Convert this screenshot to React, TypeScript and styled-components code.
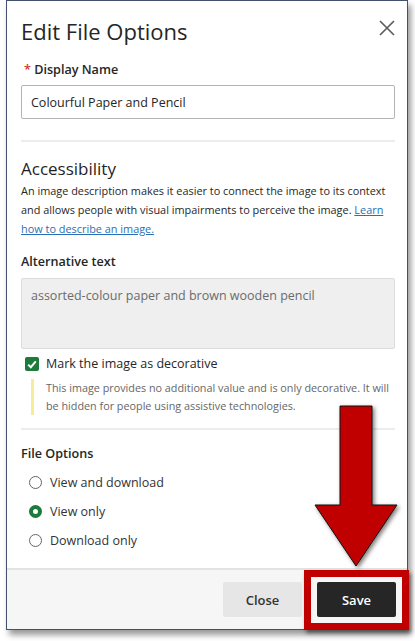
import { createGlobalStyle, styled } from 'styled-components';

const GlobalStyle = createGlobalStyle`
  html, body {
    margin: 0;
    padding: 0;
    background: #ffffff;
  }
  body {
    font-family: 'Open Sans', 'Liberation Sans', sans-serif;
    color: #262626;
  }
  * {
    box-sizing: border-box;
  }
`;

const FILE_OPTIONS = [
  { id: 'both', label: 'View and download', checked: false },
  { id: 'view', label: 'View only', checked: true },
  { id: 'download', label: 'Download only', checked: false },
];

const App = () => {
  return (
    <Page>
      <GlobalStyle />
      <Dialog>
        <Body>
          <Header>
            <Title>Edit File Options</Title>
            <CloseIcon aria-label='Close'>
              <svg width='16' height='16' viewBox='0 0 16 16'>
                <path d='M1 1 L15 15 M15 1 L1 15' stroke='#5a5a5a' strokeWidth='1.6' />
              </svg>
            </CloseIcon>
          </Header>

          <Label $indent>
            <Required>*</Required> Display Name
          </Label>
          <TextInput>Colourful Paper and Pencil</TextInput>

          <Divider />

          <SectionTitle>Accessibility</SectionTitle>
          <Paragraph>
            An image description makes it easier to connect the image to its context
            and allows people with visual impairments to perceive the image.{' '}
            <LinkText>Learn how to describe an image.</LinkText>
          </Paragraph>

          <Label $top={15}>Alternative text</Label>
          <TextArea>assorted-colour paper and brown wooden pencil</TextArea>

          <CheckRow>
            <CheckBox>
              <svg width='10' height='9' viewBox='0 0 10 9'>
                <path d='M1.2 4.6 L3.8 7.2 L8.8 1.4' fill='none' stroke='#fff' strokeWidth='2' />
              </svg>
            </CheckBox>
            <CheckLabel>Mark the image as decorative</CheckLabel>
          </CheckRow>
          <HelpNote>
            This image provides no additional value and is only decorative. It will
            be hidden for people using assistive technologies.
          </HelpNote>

          <Divider $top={13} />

          <Label $top={15}>File Options</Label>
          <RadioList>
            {FILE_OPTIONS.map((opt) => (
              <RadioRow key={opt.id}>
                <Radio $checked={opt.checked} />
                <RadioLabel>{opt.label}</RadioLabel>
              </RadioRow>
            ))}
          </RadioList>
        </Body>

        <Footer>
          <Button>Close</Button>
          <Button $primary>Save</Button>
        </Footer>
      </Dialog>

      <Highlight />
      <Arrow width='90' height='170' viewBox='0 0 90 170'>
        <polygon
          points='27,3 59,3 59,102 84,102 43,163 2,102 27,102'
          fill='#c00000'
          stroke='#111'
          strokeWidth='1'
        />
      </Arrow>
    </Page>
  );
};

const Page = styled.div`
  position: relative;
  width: 415px;
  height: 641px;
  overflow: hidden;
`;

const Dialog = styled.div`
  margin-left: 6px;
  width: 402px;
  height: 630px;
  border: 1px solid #44516d;
  background: #fff;
  box-shadow: 3px 5px 6px rgba(0, 0, 0, 0.4);
  display: flex;
  flex-direction: column;
`;

const Body = styled.div`
  flex: 1;
  padding: 15px 12px 0 14px;
`;

const Header = styled.div`
  display: flex;
  justify-content: space-between;
  align-items: flex-start;
  height: 30px;
`;

const Title = styled.h1`
  margin: 0;
  font-size: 22px;
  font-weight: 400;
  line-height: 30px;
  color: #262626;
`;

const CloseIcon = styled.div`
  margin-top: 4px;
  width: 16px;
  height: 16px;
  display: flex;
`;

const Label = styled.div<{ $top?: number; $indent?: boolean }>`
  margin-top: ${(p) => p.$top ?? 15}px;
  padding-left: ${(p) => (p.$indent ? 3 : 0)}px;
  font-size: 12.6px;
  font-weight: 600;
  line-height: 18px;
  color: #262626;
`;

const Required = styled.span`
  color: #d0352b;
  font-weight: 600;
`;

const TextInput = styled.div`
  margin-top: 6px;
  height: 34px;
  border: 1px solid #b3b3b3;
  border-radius: 2px;
  padding: 0 9px;
  display: flex;
  align-items: center;
  font-size: 12.5px;
  color: #262626;
`;

const Divider = styled.div<{ $top?: number }>`
  margin-top: ${(p) => p.$top ?? 21}px;
  height: 2px;
  background: #ececec;
`;

const SectionTitle = styled.h2`
  margin: 16px 0 0;
  font-size: 17px;
  font-weight: 500;
  line-height: 22px;
  color: #1f1f1f;
`;

const Paragraph = styled.p`
  margin: 2px 0 0;
  font-size: 10.9px;
  line-height: 18.8px;
  color: #262626;
`;

const LinkText = styled.span`
  color: #2a6fb4;
  text-decoration: underline;
`;

const TextArea = styled.div`
  margin-top: 7px;
  height: 71px;
  border: 1px solid #dcdcdc;
  border-radius: 2px;
  background: #efefef;
  padding: 8px 9px;
  font-size: 12.5px;
  line-height: 18px;
  color: #6b6b6b;
`;

const CheckRow = styled.div`
  margin-top: 6px;
  display: flex;
  align-items: center;
  gap: 7px;
  padding-left: 4px;
  height: 18px;
`;

const CheckBox = styled.span`
  width: 14px;
  height: 14px;
  border-radius: 2px;
  background: #1c7a3a;
  display: flex;
  align-items: center;
  justify-content: center;
`;

const CheckLabel = styled.span`
  font-size: 12.5px;
  line-height: 18px;
  color: #262626;
`;

const HelpNote = styled.div`
  margin: 6px 0 0 10px;
  border-left: 3px solid #f7ec98;
  padding: 0 0 0 12px;
  font-size: 10.8px;
  line-height: 18px;
  color: #666;
`;

const RadioList = styled.div`
  margin-top: 9px;
  display: flex;
  flex-direction: column;
  gap: 9px;
  padding-left: 8px;
`;

const RadioRow = styled.div`
  display: flex;
  align-items: center;
  gap: 8px;
  height: 20px;
`;

const Radio = styled.span<{ $checked?: boolean }>`
  width: 13px;
  height: 13px;
  border-radius: 50%;
  border: ${(p) => (p.$checked ? '4px solid #1c7a3a' : '1.3px solid #666')};
  background: #fff;
`;

const RadioLabel = styled.span`
  font-size: 12.5px;
  color: #333;
`;

const Footer = styled.div`
  height: 61px;
  border-top: 2px solid #e3e3e3;
  background: #f6f6f6;
  display: flex;
  align-items: center;
  justify-content: flex-end;
  gap: 15px;
  padding-right: 11px;
`;

const Button = styled.div<{ $primary?: boolean }>`
  width: 79px;
  height: 35px;
  border-radius: 2px;
  display: flex;
  align-items: center;
  justify-content: center;
  font-size: 13px;
  font-weight: 600;
  background: ${(p) => (p.$primary ? '#262626' : '#e6e6e6')};
  color: ${(p) => (p.$primary ? '#fff' : '#333')};
`;

const Highlight = styled.div`
  position: absolute;
  left: 304px;
  top: 570px;
  width: 105px;
  height: 60px;
  border: 7px solid #c00000;
  box-shadow: 2px 3px 4px rgba(0, 0, 0, 0.5);
`;

const Arrow = styled.svg`
  position: absolute;
  left: 313px;
  top: 403px;
  filter: drop-shadow(2px 2px 2px rgba(0, 0, 0, 0.5));
`;

export default App;
